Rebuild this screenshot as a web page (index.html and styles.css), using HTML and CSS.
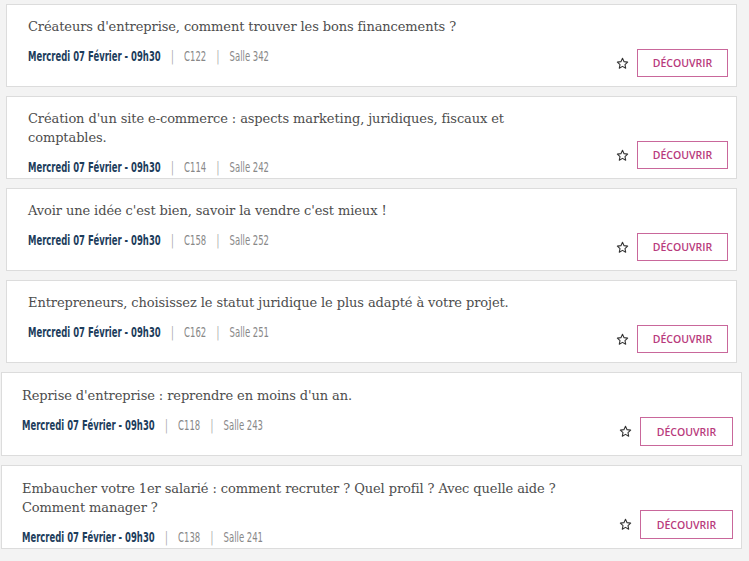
FILE: index.html
```html
<!DOCTYPE html>
<html lang="fr">
<head>
<meta charset="utf-8">
<link rel="stylesheet" href="styles.css">
</head>
<body>
<div class="group group-a">
  <div class="card">
    <div class="info">
      <h3 class="title">Créateurs d'entreprise, comment trouver les bons financements ?</h3>
      <p class="meta"><span class="date">Mercredi 07 Février - 09h30</span><span class="sep">|</span>C122<span class="sep">|</span>Salle 342</p>
    </div>
    <div class="actions">
      <svg class="star" viewBox="0 0 24 24" width="13" height="13"><path d="M12 2.5l2.9 6.1 6.6.8-4.9 4.6 1.3 6.6L12 17.3l-5.9 3.3 1.3-6.6-4.9-4.6 6.6-.8z" fill="none" stroke="#333" stroke-width="2" stroke-linejoin="round"/></svg>
      <a class="btn">DÉCOUVRIR</a>
    </div>
  </div>
  <div class="card">
    <div class="info">
      <h3 class="title">Création d'un site e-commerce : aspects marketing, juridiques, fiscaux et comptables.</h3>
      <p class="meta"><span class="date">Mercredi 07 Février - 09h30</span><span class="sep">|</span>C114<span class="sep">|</span>Salle 242</p>
    </div>
    <div class="actions">
      <svg class="star" viewBox="0 0 24 24" width="13" height="13"><path d="M12 2.5l2.9 6.1 6.6.8-4.9 4.6 1.3 6.6L12 17.3l-5.9 3.3 1.3-6.6-4.9-4.6 6.6-.8z" fill="none" stroke="#333" stroke-width="2" stroke-linejoin="round"/></svg>
      <a class="btn">DÉCOUVRIR</a>
    </div>
  </div>
  <div class="card">
    <div class="info">
      <h3 class="title">Avoir une idée c'est bien, savoir la vendre c'est mieux !</h3>
      <p class="meta"><span class="date">Mercredi 07 Février - 09h30</span><span class="sep">|</span>C158<span class="sep">|</span>Salle 252</p>
    </div>
    <div class="actions">
      <svg class="star" viewBox="0 0 24 24" width="13" height="13"><path d="M12 2.5l2.9 6.1 6.6.8-4.9 4.6 1.3 6.6L12 17.3l-5.9 3.3 1.3-6.6-4.9-4.6 6.6-.8z" fill="none" stroke="#333" stroke-width="2" stroke-linejoin="round"/></svg>
      <a class="btn">DÉCOUVRIR</a>
    </div>
  </div>
  <div class="card">
    <div class="info">
      <h3 class="title">Entrepreneurs, choisissez le statut juridique le plus adapté à votre projet.</h3>
      <p class="meta"><span class="date">Mercredi 07 Février - 09h30</span><span class="sep">|</span>C162<span class="sep">|</span>Salle 251</p>
    </div>
    <div class="actions">
      <svg class="star" viewBox="0 0 24 24" width="13" height="13"><path d="M12 2.5l2.9 6.1 6.6.8-4.9 4.6 1.3 6.6L12 17.3l-5.9 3.3 1.3-6.6-4.9-4.6 6.6-.8z" fill="none" stroke="#333" stroke-width="2" stroke-linejoin="round"/></svg>
      <a class="btn">DÉCOUVRIR</a>
    </div>
  </div>
</div>
<div class="group group-b">
  <div class="card">
    <div class="info">
      <h3 class="title">Reprise d'entreprise : reprendre en moins d'un an.</h3>
      <p class="meta"><span class="date">Mercredi 07 Février - 09h30</span><span class="sep">|</span>C118<span class="sep">|</span>Salle 243</p>
    </div>
    <div class="actions">
      <svg class="star" viewBox="0 0 24 24" width="13" height="13"><path d="M12 2.5l2.9 6.1 6.6.8-4.9 4.6 1.3 6.6L12 17.3l-5.9 3.3 1.3-6.6-4.9-4.6 6.6-.8z" fill="none" stroke="#333" stroke-width="2" stroke-linejoin="round"/></svg>
      <a class="btn">DÉCOUVRIR</a>
    </div>
  </div>
  <div class="card">
    <div class="info">
      <h3 class="title">Embaucher votre 1er salarié : comment recruter ? Quel profil ? Avec quelle aide ? Comment manager ?</h3>
      <p class="meta"><span class="date">Mercredi 07 Février - 09h30</span><span class="sep">|</span>C138<span class="sep">|</span>Salle 241</p>
    </div>
    <div class="actions">
      <svg class="star" viewBox="0 0 24 24" width="13" height="13"><path d="M12 2.5l2.9 6.1 6.6.8-4.9 4.6 1.3 6.6L12 17.3l-5.9 3.3 1.3-6.6-4.9-4.6 6.6-.8z" fill="none" stroke="#333" stroke-width="2" stroke-linejoin="round"/></svg>
      <a class="btn">DÉCOUVRIR</a>
    </div>
  </div>
</div>
</body>
</html>
```
FILE: styles.css
```css
html, body {
  margin: 0;
  padding: 0;
  background: #f3f3f3;
}
body {
  padding-top: 4px;
}
.group {
  display: flex;
  flex-direction: column;
  gap: 9px;
}
.group-a {
  margin-left: 6px;
  width: 731px;
}
.group-b {
  margin-top: 9px;
  margin-left: 1px;
  width: 741px;
}
.card {
  display: flex;
  justify-content: space-between;
  background: #fff;
  border: 1px solid #dcdcdc;
  min-height: 83px;
  box-sizing: border-box;
  padding: 12px 8px 0 21px;
}
.group-b .card {
  min-height: 84px;
  padding: 13px 8px 0 20px;
}
.info {
  width: 545px;
}
.title {
  margin: 0;
  font-family: "DejaVu Serif", serif;
  font-weight: normal;
  font-size: 13px;
  letter-spacing: -0.1px;
  line-height: 19px;
  color: #4d4d4d;
}
.meta {
  margin: 12px 0 0;
  font-family: "DejaVu Sans", sans-serif;
  font-size: 14px;
  line-height: 16px;
  color: #888;
  white-space: nowrap;
  transform: scaleX(0.605);
  transform-origin: left center;
}
.date {
  color: #1d3d5c;
  font-weight: bold;
}
.sep {
  margin: 0 17px;
  color: #a8a8a8;
}
.actions {
  align-self: flex-end;
  display: flex;
  align-items: center;
  gap: 8px;
  margin-bottom: 9px;
}
.star {
  display: block;
}
.btn {
  display: flex;
  align-items: center;
  justify-content: center;
  width: 91px;
  height: 28px;
  box-sizing: border-box;
  border: 1px solid #c9679b;
  color: #b83a7c;
  font-family: "Open Sans", sans-serif;
  font-size: 10.5px;
  font-weight: 600;
}
.group-b .btn {
  width: 93px;
  height: 29px;
}
```
